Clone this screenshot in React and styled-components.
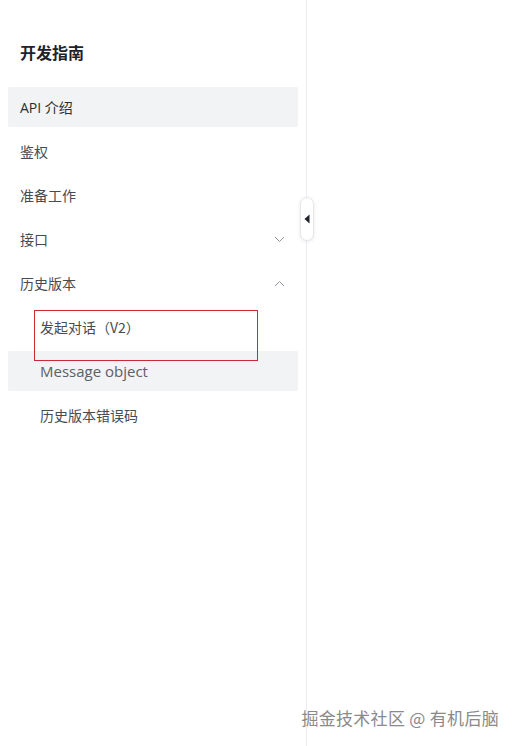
import styled, { createGlobalStyle } from "styled-components";

const GlobalStyle = createGlobalStyle`
  html, body {
    margin: 0;
    padding: 0;
    background: #fff;
    font-family: "Noto Sans", "Noto Sans CJK SC", sans-serif;
  }
`;

const Page = styled.div`
  position: relative;
  width: 516px;
  height: 746px;
  display: flex;
  overflow: hidden;
`;

const Sidebar = styled.nav`
  width: 307px;
  height: 100%;
  box-sizing: border-box;
  border-right: 1px solid #ebedf0;
  padding: 38px 8px 0 8px;
  display: flex;
  flex-direction: column;
`;

const Title = styled.h2`
  margin: 0 0 20px 12px;
  font-size: 16px;
  font-weight: 700;
  color: #1f2329;
  line-height: 28px;
`;

const Item = styled.div`
  height: 40px;
  margin-bottom: 4px;
  padding: 0 13px 0 ${(p) => (p.$sub ? 32 : 12)}px;
  display: flex;
  align-items: center;
  justify-content: space-between;
  font-size: 14px;
  color: ${(p) => (p.$active ? "#2b2f36" : "#474b52")};
  background: ${(p) => (p.$active ? "#f2f3f5" : "transparent")};
  border-radius: 2px;
`;

const Label = styled.span`
  font-family: ${(p) =>
    p.$latin ? '"Open Sans", "Noto Sans CJK SC", sans-serif' : '"Noto Sans CJK SC", sans-serif'};
  font-size: ${(p) => (p.$large ? "15px" : "inherit")};
  color: ${(p) => (p.$muted ? "#5c6068" : "inherit")};
`;

const Chevron = ({ up }) => (
  <svg width="11" height="7" viewBox="0 0 11 7" fill="none">
    <path
      d={up ? "M1 6 L5.5 1.5 L10 6" : "M1 1 L5.5 5.5 L10 1"}
      stroke="#8f959e"
      strokeWidth="1"
    />
  </svg>
);

const Toggle = styled.div`
  position: absolute;
  left: 300px;
  top: 197px;
  width: 14px;
  height: 44px;
  box-sizing: border-box;
  background: #fff;
  border: 1px solid #e4e6ea;
  border-radius: 8px;
  box-shadow: 0 1px 4px rgba(0, 0, 0, 0.08);
  display: flex;
  align-items: center;
  justify-content: center;
`;

const Marker = styled.div`
  position: absolute;
  left: 34px;
  top: 310px;
  width: 224px;
  height: 51px;
  box-sizing: border-box;
  border: 1px solid #c92a35;
`;

const Watermark = styled.div`
  position: absolute;
  right: 17px;
  bottom: 16px;
  font-family: "Noto Sans CJK SC", sans-serif;
  font-size: 17px;
  color: #8a8a8a;
  text-shadow: 0 0 1px #fff, 1px 1px 0 #fff;
  letter-spacing: 0.3px;
`;

export default function App() {
  return (
    <Page>
      <GlobalStyle />
      <Sidebar>
        <Title>
          <Label>开发指南</Label>
        </Title>
        <Item $active>
          <Label $latin>API 介绍</Label>
        </Item>
        <Item>
          <Label>鉴权</Label>
        </Item>
        <Item>
          <Label>准备工作</Label>
        </Item>
        <Item>
          <Label>接口</Label>
          <Chevron />
        </Item>
        <Item>
          <Label>历史版本</Label>
          <Chevron up />
        </Item>
        <Item $sub>
          <Label>发起对话（V2）</Label>
        </Item>
        <Item $sub $active>
          <Label $latin $muted $large>Message object</Label>
        </Item>
        <Item $sub>
          <Label>历史版本错误码</Label>
        </Item>
      </Sidebar>
      <Toggle>
        <svg width="6" height="10" viewBox="0 0 6 10">
          <path d="M5.5 0.5 L0.5 5 L5.5 9.5 Z" fill="#1f2329" />
        </svg>
      </Toggle>
      <Marker />
      <Watermark>掘金技术社区 @ 有机后脑</Watermark>
    </Page>
  );
}
